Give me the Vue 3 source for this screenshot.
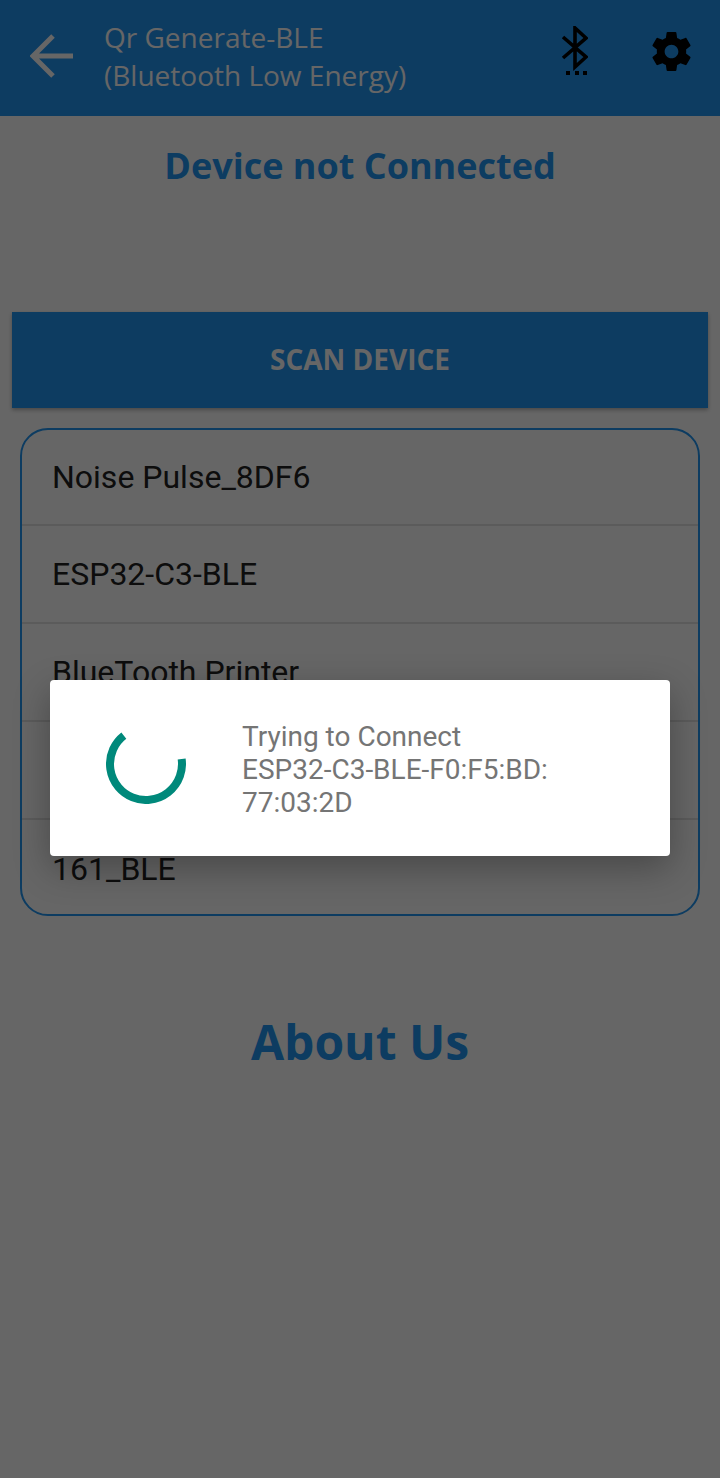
<template>
  <div class="screen">
    <header class="app-bar">
      <svg class="back" width="44" height="44" viewBox="0 0 44 44">
        <path d="M43 22H3M23 2 3 22l20 20" fill="none" stroke="#fff" stroke-width="5" />
      </svg>
      <div class="app-title">
        <div>Qr Generate-BLE</div>
        <div>(Bluetooth Low Energy)</div>
      </div>
      <svg class="bt-icon" width="28" height="50" viewBox="0 0 28 50">
        <path d="M3 11 26 31 15 41V2l11 10L3 32" fill="none" stroke="#000" stroke-width="3.6" />
        <rect x="6" y="45" width="4" height="4" />
        <rect x="15" y="45" width="4" height="4" />
        <rect x="23" y="45" width="4" height="4" />
      </svg>
      <svg class="gear" width="47" height="47" viewBox="0 0 24 24">
        <path d="M19.43 12.98c.04-.32.07-.64.07-.98s-.03-.66-.07-.98l2.11-1.65c.19-.15.24-.42.12-.64l-2-3.46c-.12-.22-.39-.3-.61-.22l-2.49 1c-.52-.4-1.08-.73-1.69-.98l-.38-2.65C14.46 2.18 14.25 2 14 2h-4c-.25 0-.46.18-.49.42l-.38 2.65c-.61.25-1.17.59-1.69.98l-2.49-1c-.23-.09-.49 0-.61.22l-2 3.46c-.13.22-.07.49.12.64l2.11 1.65c-.04.32-.07.65-.07.98s.03.66.07.98l-2.11 1.65c-.19.15-.24.42-.12.64l2 3.46c.12.22.39.3.61.22l2.49-1c.52.4 1.08.73 1.69.98l.38 2.65c.03.24.24.42.49.42h4c.25 0 .46-.18.49-.42l.38-2.65c.61-.25 1.17-.59 1.69-.98l2.49 1c.23.09.49 0 .61-.22l2-3.46c.12-.22.07-.49-.12-.64l-2.11-1.65zM12 15.5c-1.93 0-3.5-1.57-3.5-3.5s1.57-3.5 3.5-3.5 3.5 1.57 3.5 3.5-1.57 3.5-3.5 3.5z" />
      </svg>
    </header>

    <h2 class="status">Device not Connected</h2>

    <button class="scan-btn">SCAN DEVICE</button>

    <ul class="device-list">
      <li v-for="d in devices" :key="d.id" class="device-row">{{ d.name }}</li>
    </ul>

    <h1 class="about">About Us</h1>

    <div class="scrim">
      <div class="dialog">
        <svg class="spinner" width="80" height="80" viewBox="0 0 80 80">
          <path :d="arcPath" fill="none" stroke="#00897b" stroke-width="8" />
        </svg>
        <div class="dialog-text">Trying to Connect<br />ESP32-C3-BLE-F0:F5:BD:<br />77:03:2D</div>
      </div>
    </div>
  </div>
</template>

<script setup>
const devices = [
  { id: 1, name: 'Noise Pulse_8DF6' },
  { id: 2, name: 'ESP32-C3-BLE' },
  { id: 3, name: 'BlueTooth Printer' },
  { id: 4, name: '' },
  { id: 5, name: '161_BLE' }
]

// spinner arc, clockwise from the right side round the bottom to the upper left
const polar = (deg) => {
  const a = (deg * Math.PI) / 180
  return `${40 + 36 * Math.cos(a)} ${40 + 36 * Math.sin(a)}`
}
const arcPath = `M ${polar(-8)} A 36 36 0 1 1 ${polar(-128)}`
</script>

<style>
html, body { margin: 0; background: #fff; }
</style>

<style scoped>
.screen {
  position: relative;
  height: 1478px;
  overflow: hidden;
  background: #fff;
  font-family: "Open Sans", "Liberation Sans", sans-serif;
  display: flex;
  flex-direction: column;
}
.app-bar {
  height: 116px;
  flex: none;
  background: #2196f3;
  display: flex;
  align-items: center;
  padding-left: 30px;
}
.back { flex: none; margin: 0 30px 4px 0; }
.app-title {
  flex: 1;
  color: #fff;
  font-size: 28px;
  line-height: 38px;
  margin-bottom: 5px;
}
.bt-icon { flex: none; margin: 0 60px 14px 0; }
.gear { flex: none; margin: 0 25px 13px 0; }
.status {
  margin: 26px 0 0;
  text-align: center;
  color: #2196f3;
  font-size: 36px;
  line-height: 48px;
  font-weight: 700;
}
.scan-btn {
  margin: 122px 12px 0;
  height: 96px;
  flex: none;
  border: none;
  padding: 0 0 2px;
  background: #2196f3;
  color: #fff;
  font: 700 28px "Open Sans", "Liberation Sans", sans-serif;
  box-shadow: 0 2px 4px rgba(0, 0, 0, 0.3);
}
.device-list {
  list-style: none;
  margin: 20px 20px 0;
  padding: 0;
  height: 488px;
  box-sizing: border-box;
  border: 2px solid #2196f3;
  border-radius: 28px;
  overflow: hidden;
  font-family: Roboto, "Liberation Sans", sans-serif;
}
.device-row {
  height: 98px;
  box-sizing: border-box;
  padding-left: 30px;
  border-bottom: 2px solid #e4e4e4;
  color: #222;
  font-size: 32px;
  line-height: 96px;
}
.device-row:first-child { height: 96px; line-height: 94px; }
.device-row:last-child { border-bottom: none; line-height: 98px; }
.about {
  margin: 93px 0 0;
  text-align: center;
  color: #2196f3;
  font-size: 48px;
  line-height: 66px;
  font-weight: 700;
}
.scrim {
  position: absolute;
  inset: 0;
  background: rgba(0, 0, 0, 0.6);
  display: flex;
  flex-direction: column;
  align-items: center;
  padding-top: 680px;
}
.dialog {
  width: 620px;
  height: 176px;
  background: #fff;
  border-radius: 4px;
  display: flex;
  align-items: center;
  box-shadow: 0 12px 36px rgba(0, 0, 0, 0.3);
}
.spinner { flex: none; margin: 0 0 8px 56px; }
.dialog-text {
  margin: 2px 0 0 56px;
  font-family: Roboto, "Liberation Sans", sans-serif;
  font-size: 28px;
  line-height: 33px;
  color: #757575;
}
</style>
